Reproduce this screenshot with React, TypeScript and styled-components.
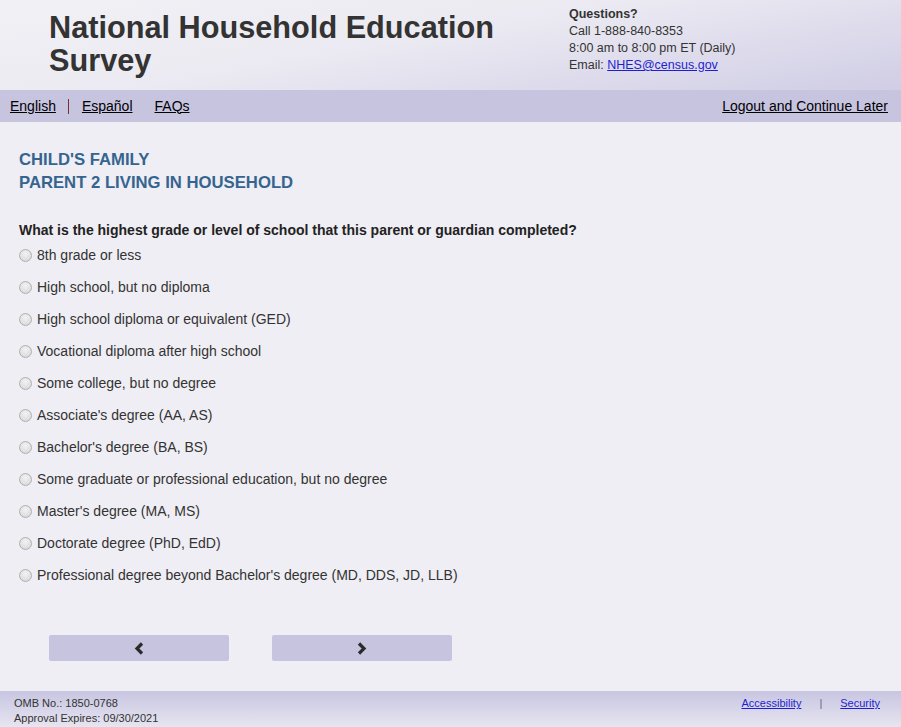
import React from "react";
import styled, { createGlobalStyle } from "styled-components";

const GlobalStyle = createGlobalStyle`
  html, body {
    margin: 0;
    padding: 0;
    background: #efeef4;
    font-family: Arial, "Liberation Sans", sans-serif;
    color: #333;
  }
`;

const Page = styled.div`
  width: 901px;
  min-height: 727px;
  display: flex;
  flex-direction: column;
  background: #efeef4;
`;

const Header = styled.header`
  height: 90px;
  box-sizing: border-box;
  display: flex;
  padding-left: 49px;
  background: linear-gradient(170deg, #f1f1f5 0%, #ebeaf2 45%, #d0cde5 100%);
`;

const Title = styled.h1`
  margin: 0;
  padding-top: 11px;
  width: 520px;
  font-size: 30.7px;
  line-height: 33px;
  font-weight: bold;
  color: #333;
`;

const Contact = styled.div`
  padding-top: 6px;
  font-size: 12.5px;
  line-height: 17px;
  color: #333;
`;

const ContactTitle = styled.div`
  font-weight: bold;
`;

const BlueLink = styled.a`
  color: #1f1fd2;
  text-decoration: underline;
`;

const NavBar = styled.nav`
  height: 32px;
  display: flex;
  align-items: center;
  justify-content: space-between;
  padding: 0 13px 0 10px;
  background: #c7c4e0;
  font-size: 14px;
`;

const NavGroup = styled.div`
  display: flex;
  align-items: center;
`;

const NavLink = styled.a<{ $sep?: boolean; $gap?: number }>`
  color: #000;
  text-decoration: underline;
  line-height: 15px;
  margin-left: ${(p) => p.$gap ?? 0}px;
  ${(p) => (p.$sep ? `border-left: 1.5px solid #7a3030; padding-left: 13px;` : ``)}
`;

const Main = styled.main`
  flex: 1;
  padding: 26px 19px 0 19px;
`;

const SectionTitle = styled.h2`
  margin: 0;
  font-size: 16.7px;
  line-height: 23px;
  font-weight: bold;
  color: #35648f;
`;

const Question = styled.div`
  margin-top: 26px;
  font-size: 14px;
  line-height: 20px;
  font-weight: bold;
  color: #222;
`;

const OptionList = styled.div`
  display: flex;
  flex-direction: column;
  margin-top: -1px;
`;

const OptionRow = styled.label`
  height: 32px;
  display: flex;
  align-items: center;
  font-size: 14px;
  color: #333;
`;

const Radio = styled.input.attrs({ type: "radio" })`
  appearance: none;
  -webkit-appearance: none;
  margin: 0 5px 0 0;
  width: 13px;
  height: 13px;
  border-radius: 50%;
  border: 1px solid #b0b0b0;
  box-sizing: border-box;
  background: radial-gradient(circle at 50% 35%, #f2f2f2 0%, #e0e0e0 60%, #d2d2d2 100%);
`;

const ButtonRow = styled.div`
  display: flex;
  gap: 43px;
  margin: 44px 0 30px 30px;
`;

const NavButton = styled.button`
  width: 180px;
  height: 26px;
  border: none;
  border-radius: 2px;
  background: #c7c4e0;
  display: flex;
  align-items: center;
  justify-content: center;
  color: #2b2b2b;
  padding: 0;
`;

const Chevron = ({ dir }: { dir: "left" | "right" }) => (
  <svg width="10" height="13" viewBox="0 0 10 13" aria-hidden="true">
    <polyline
      points={dir === "left" ? "8,1.5 3,6.5 8,11.5" : "2,1.5 7,6.5 2,11.5"}
      fill="none"
      stroke="currentColor"
      strokeWidth="3.2"
      strokeLinejoin="miter"
    />
  </svg>
);

const Footer = styled.footer`
  height: 36px;
  box-sizing: border-box;
  display: flex;
  justify-content: space-between;
  padding: 5px 21px 0 14px;
  background: linear-gradient(180deg, #c8c5e1 0%, #e6e5f0 100%);
  font-size: 11px;
  line-height: 15px;
  color: #333;
`;

const FooterLinks = styled.div`
  display: flex;
  align-items: flex-start;
`;

const FooterSep = styled.span`
  color: #6b5fa0;
  margin: 0 18px;
`;

const options = [
  "8th grade or less",
  "High school, but no diploma",
  "High school diploma or equivalent (GED)",
  "Vocational diploma after high school",
  "Some college, but no degree",
  "Associate's degree (AA, AS)",
  "Bachelor's degree (BA, BS)",
  "Some graduate or professional education, but no degree",
  "Master's degree (MA, MS)",
  "Doctorate degree (PhD, EdD)",
  "Professional degree beyond Bachelor's degree (MD, DDS, JD, LLB)",
];

export default function App() {
  return (
    <Page>
      <GlobalStyle />
      <Header>
        <Title>
          National Household Education
          <br />
          Survey
        </Title>
        <Contact>
          <ContactTitle>Questions?</ContactTitle>
          <div>Call 1-888-840-8353</div>
          <div>8:00 am to 8:00 pm ET (Daily)</div>
          <div>
            Email: <BlueLink href="#">NHES@census.gov</BlueLink>
          </div>
        </Contact>
      </Header>
      <NavBar>
        <NavGroup>
          <NavLink href="#">English</NavLink>
          <NavLink href="#" $sep $gap={12}>
            Español
          </NavLink>
          <NavLink href="#" $gap={22}>
            FAQs
          </NavLink>
        </NavGroup>
        <NavLink href="#">Logout and Continue Later</NavLink>
      </NavBar>
      <Main>
        <SectionTitle>
          CHILD'S FAMILY
          <br />
          PARENT 2 LIVING IN HOUSEHOLD
        </SectionTitle>
        <Question>
          What is the highest grade or level of school that this parent or guardian completed?
        </Question>
        <OptionList>
          {options.map((o) => (
            <OptionRow key={o}>
              <Radio name="grade" />
              {o}
            </OptionRow>
          ))}
        </OptionList>
        <ButtonRow>
          <NavButton aria-label="Previous">
            <Chevron dir="left" />
          </NavButton>
          <NavButton aria-label="Next">
            <Chevron dir="right" />
          </NavButton>
        </ButtonRow>
      </Main>
      <Footer>
        <div>
          <div>OMB No.: 1850-0768</div>
          <div>Approval Expires: 09/30/2021</div>
        </div>
        <FooterLinks>
          <BlueLink href="#">Accessibility</BlueLink>
          <FooterSep>|</FooterSep>
          <BlueLink href="#">Security</BlueLink>
        </FooterLinks>
      </Footer>
    </Page>
  );
}
